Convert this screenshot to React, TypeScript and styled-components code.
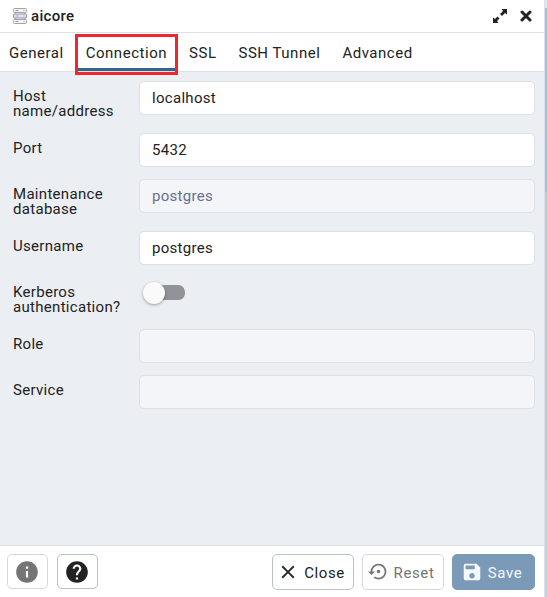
import React from "react";
import styled, { createGlobalStyle, css } from "styled-components";
import { MdClose, MdHelp, MdInfo, MdSave, MdSettingsBackupRestore } from "react-icons/md";

const GlobalStyle = createGlobalStyle`
  *, *::before, *::after { box-sizing: border-box; }
  body {
    margin: 0;
    font-family: Roboto, "Liberation Sans", sans-serif;
    font-size: 15px;
    color: #222;
    background: #fff;
  }
  button, input { font: inherit; color: inherit; }
`;

const Screen = styled.div`
  display: flex;
  min-height: 100vh;
`;

const Backdrop = styled.div`
  flex: 0 0 2px;
  background: linear-gradient(#e4e7ee 0 8px, #adc0d0 8px 192px, #c6c9d1 192px 480px, #c9cfdd 480px);
`;

const Dialog = styled.main`
  flex: 1;
  min-width: 0;
  display: flex;
  flex-direction: column;
  border-right: 1px solid #dde0e9;
`;

const TitleBar = styled.header`
  display: flex;
  align-items: center;
  height: 33px;
  padding: 0 12px;
  border-bottom: 1px solid #dde0e9;
`;

const Title = styled.h1`
  flex: 1;
  margin: 0 0 0 3px;
  font-size: 15px;
  line-height: 20px;
  font-weight: 500;
  letter-spacing: 0.02em;
`;

const WindowButton = styled.button`
  display: flex;
  align-items: center;
  justify-content: center;
  width: 26px;
  height: 24px;
  padding: 0;
  border: 0;
  background: none;
  &:last-child { margin-right: -7px; }
`;

const Tabs = styled.nav`
  display: flex;
  height: 39px;
  border-bottom: 1px solid #dde0e9;
`;

const Tab = styled.button<{ $active?: boolean }>`
  position: relative;
  padding: 5px 8px 0;
  margin-right: 6px;
  border: 0;
  border-bottom: 3px solid transparent;
  background: none;
  line-height: 18px;
  letter-spacing: 0.035em;
  white-space: nowrap;
  &:first-child { padding-left: 9px; }
  ${({ $active }) => $active && css`border-bottom-color: #326690;`}
`;

const Highlight = styled.span`
  position: absolute;
  inset: 1px -3px -7px;
  border: 3px solid #f0262b;
  pointer-events: none;
`;

const Form = styled.form`
  flex: 1;
  display: flex;
  flex-direction: column;
  gap: 12px;
  padding: 9px 9px 20px 13px;
  background: #ebeef3;
`;

const Row = styled.div`
  display: grid;
  grid-template-columns: 114px 1fr;
  column-gap: 12px;
  align-items: start;
`;

const Label = styled.label`
  padding: 8px 0 2px;
  line-height: 15px;
  letter-spacing: 0.02em;
`;

const TextInput = styled.input`
  width: 100%;
  height: 34px;
  padding: 0 12px;
  border: 1px solid #dde0e6;
  border-radius: 5px;
  background: #fff;
  outline: 0;
  letter-spacing: 0.02em;
  &:disabled {
    background: #f3f5f9;
    color: #6b6e8c;
  }
`;

const Switch = styled.input`
  appearance: none;
  width: 42px;
  height: 22px;
  margin: 5px 0 0 4px;
  border-radius: 11px;
  background:
    linear-gradient(#929397, #929397) 12px 3px / 23px 15px no-repeat,
    radial-gradient(circle at 35px 10.5px, #929397 7px, transparent 8px);
  &::before {
    content: "";
    display: block;
    width: 22px;
    height: 22px;
    border-radius: 50%;
    background: #fafafa;
    box-shadow: 0 1px 3px rgba(0, 0, 0, 0.35);
  }
`;

const Footer = styled.footer`
  display: flex;
  align-items: center;
  height: 52px;
  padding: 0 9px 0 7px;
  border-top: 1px solid #dde0e9;
`;

const Group = styled.div<{ $end?: boolean }>`
  display: flex;
  gap: ${({ $end }) => ($end ? 8 : 9)}px;
  margin-left: ${({ $end }) => ($end ? "auto" : "0")};
`;

const Button = styled.button<{ $kind?: "primary" | "muted"; $icon?: boolean }>`
  display: flex;
  align-items: center;
  justify-content: center;
  gap: 5px;
  min-width: ${({ $icon }) => ($icon ? 41 : 82)}px;
  height: ${({ $icon }) => ($icon ? 35 : 36)}px;
  padding: ${({ $icon }) => ($icon ? "0 6px 0 5px" : "0 8px 0 4px")};
  border: 1px solid #bac1cd;
  border-radius: 5px;
  background: #fff;
  letter-spacing: 0.04em;
  ${({ $kind }) => $kind === "muted" && css`
    border-color: #d6d9e3;
    color: #757575;
  `}
  ${({ $kind }) => $kind === "primary" && css`
    min-width: 83px;
    border-color: #7b9ab8;
    background: #7b9ab8;
    color: #f5f8fa;
  `}
`;

const Caption = styled.span`
  padding-top: 2px;
`;

const ServerIcon = () => (
  <svg width="16" height="18" viewBox="0 0 16 18" fill="#f2f2f2" stroke="#a3a3a3" aria-hidden="true">
    <path d="M3 5.5v7M13 5.5v7" />
    <rect x="1.5" y="1.5" width="13" height="4" rx="1" />
    <rect x="1.5" y="7" width="13" height="4" rx="1" fill="#e6e6f5" stroke="#9290b4" />
    <rect x="1.5" y="12.5" width="13" height="4" rx="1" />
    <path d="M3.5 3.5h3M3.5 9h3M3.5 14.5h3M11.5 3.5h1M11.5 9h1M11.5 14.5h1" />
  </svg>
);

const ExpandIcon = () => (
  <svg width="14" height="14" viewBox="0 0 14 14" fill="#222" aria-hidden="true">
    <path d="M8.5 0H14v5.500L12 4 9 7 7 5l3-3zM5.500 14H0V8.500L2 10l2.500-2.500 2 2L4 12z" />
  </svg>
);

const CrossIcon = () => (
  <svg width="12" height="12" viewBox="0 0 12 12" fill="none" stroke="#222" strokeWidth="3" strokeLinecap="round" aria-hidden="true">
    <path d="M2 2l8 8M10 2l-8 8" />
  </svg>
);

const tabs = ["General", "Connection", "SSL", "SSH Tunnel", "Advanced"];

const fields = [
  { id: "host", label: "Host name/address", value: "localhost" },
  { id: "port", label: "Port", value: "5432" },
  { id: "database", label: "Maintenance database", value: "postgres", disabled: true },
  { id: "username", label: "Username", value: "postgres" },
  { id: "kerberos", label: "Kerberos authentication?", toggle: true },
  { id: "role", label: "Role", value: "", disabled: true },
  { id: "service", label: "Service", value: "", disabled: true },
];

export default function App() {
  return (
    <Screen>
      <GlobalStyle />
      <Dialog>
        <TitleBar>
          <ServerIcon />
          <Title>aicore</Title>
          <WindowButton type="button" aria-label="Maximize"><ExpandIcon /></WindowButton>
          <WindowButton type="button" aria-label="Close window"><CrossIcon /></WindowButton>
        </TitleBar>
        <Tabs role="tablist">
          {tabs.map((name) => {
            const active = name === "Connection";
            return (
              <Tab key={name} type="button" role="tab" aria-selected={active} $active={active}>
                {name}
                {active && <Highlight />}
              </Tab>
            );
          })}
        </Tabs>
        <Form>
          {fields.map((f) => (
            <Row key={f.id}>
              <Label htmlFor={f.id}>{f.label}</Label>
              {f.toggle
                ? <Switch id={f.id} type="checkbox" role="switch" />
                : <TextInput id={f.id} type="text" defaultValue={f.value} disabled={f.disabled} />}
            </Row>
          ))}
        </Form>
        <Footer>
          <Group>
            <Button type="button" $icon $kind="muted" aria-label="Information"><MdInfo size={26} /></Button>
            <Button type="button" $icon aria-label="Help"><MdHelp size={26} /></Button>
          </Group>
          <Group $end>
            <Button type="button"><MdClose size={22} /><Caption>Close</Caption></Button>
            <Button type="button" $kind="muted"><MdSettingsBackupRestore size={21} /><Caption>Reset</Caption></Button>
            <Button type="button" $kind="primary"><MdSave size={22} /><Caption>Save</Caption></Button>
          </Group>
        </Footer>
      </Dialog>
      <Backdrop />
    </Screen>
  );
}
